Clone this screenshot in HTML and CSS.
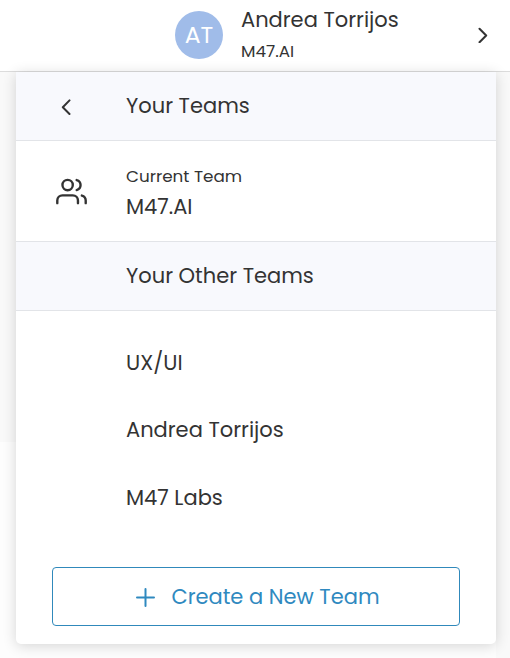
FILE: index.html
```html
<!DOCTYPE html>
<html lang="en">
<head>
    <meta charset="UTF-8">
    <meta name="viewport" content="width=device-width, initial-scale=1.0">
    <title>Your Teams</title>
    <link rel="stylesheet" href="styles.css">
</head>
<body>

<!-- User bar -->
<header class="user-bar">
    <div class="avatar">AT</div>
    <div class="user-info">
        <div class="user-name">Andrea Torrijos</div>
        <div class="user-team">M47.AI</div>
    </div>
    <svg class="chevron" viewBox="0 0 10 16"><path d="M1.5 1.7 8.2 8.5l-6.7 6.8"/></svg>
</header>

<main class="content">
    <div class="team-menu">
        <!-- Menu title -->
        <div class="menu-row menu-heading">
            <div class="row-icon back-icon">
                <svg class="chevron" viewBox="0 0 10 16"><path d="M8.5 1.4 1.8 8.2l6.7 6.8"/></svg>
            </div>
            <h1 class="teams-title">Your Teams</h1>
        </div>

        <!-- Current team -->
        <div class="menu-row current-team">
            <div class="row-icon">
                <svg class="users-icon" viewBox="0 0 24 24">
                    <path d="M17 21v-2a4 4 0 0 0-4-4H5a4 4 0 0 0-4 4v2"/>
                    <circle cx="9" cy="7" r="4"/>
                    <path d="M23 21v-2a4 4 0 0 0-3-3.87"/>
                    <path d="M16 3.13a4 4 0 0 1 0 7.75"/>
                </svg>
            </div>
            <div>
                <div class="current-label">Current Team</div>
                <div class="current-name">M47.AI</div>
            </div>
        </div>

        <!-- Other teams -->
        <div class="menu-row menu-heading other-heading">
            <h2 class="other-title">Your Other Teams</h2>
        </div>
        <ul class="team-list">
            <li class="team-ux">UX/UI</li>
            <li class="team-user">Andrea Torrijos</li>
            <li class="team-labs">M47 Labs</li>
        </ul>

        <button class="create-btn">
            <svg class="plus-icon" viewBox="0 0 20 20"><path d="M10.5 2v17M2 10.5h17"/></svg>
            <span>Create a New Team</span>
        </button>
    </div>
</main>

</body>
</html>
```

FILE: styles.css
```css
/* Reset styles */
* {
    margin: 0;
    padding: 0;
    box-sizing: border-box;
}

body {
    height: 658px;
    overflow: hidden;
    display: flex;
    flex-direction: column;
    background-color: #fff;
    color: #333;
    font-family: Poppins, Inter, sans-serif;
    font-size: 21px;
    line-height: 30px;
}

svg {
    display: block;
    fill: none;
    stroke: currentColor;
    stroke-linecap: round;
    stroke-linejoin: round;
}

/* User bar */
.user-bar {
    flex: none;
    display: flex;
    align-items: center;
    height: 72px;
    padding: 0 22px 1px 175px;
    border-bottom: 1px solid #dcdcdc;
}

.avatar {
    width: 48px;
    height: 48px;
    margin-right: 18px;
    border-radius: 50%;
    background-color: #a0bce9;
    color: #fff;
    font-size: 23.5px;
    font-weight: 400;
    line-height: 48px;
    text-align: center;
}

.user-info {
    flex: 1;
    white-space: nowrap;
}

.user-name {
    line-height: 33px;
}

.user-team {
    font-size: 16.8px;
    line-height: 31px;
}

.chevron {
    width: 10px;
    height: 16px;
    stroke-width: 2;
}

/* Page behind the menu */
.content {
    flex: 1;
    padding: 0 14px 14px 16px;
    background: linear-gradient(#fdfdfd, #fdfdfd) 0 370px / 496px 100% no-repeat #f9f9f9;
}

/* Team menu */
.team-menu {
    height: 572px;
    border-radius: 0 0 5px 5px;
    background-color: #fff;
    box-shadow: 0 2px 14px rgba(0, 0, 0, 0.16);
}

.menu-row {
    display: flex;
    align-items: center;
    border-bottom: 1px solid #e2e4e8;
}

.menu-heading {
    height: 69px;
    background-color: #f8f9fd;
}

.menu-heading h1,
.menu-heading h2 {
    font-size: 21px;
    font-weight: 400;
}

.row-icon {
    width: 110px;
    display: flex;
    justify-content: center;
}

.back-icon {
    padding: 2px 11px 0 0;
}

.current-team {
    height: 101px;
    padding-top: 1px;
}

.users-icon {
    width: 31px;
    height: 31px;
    stroke-width: 1.85;
}

.current-label {
    margin: -1px 0 1px;
    font-size: 16.8px;
}

.other-heading {
    padding-left: 110px;
}

.team-list {
    padding: 18px 0 0 110px;
    list-style: none;
}

.team-list li {
    height: 67px;
    line-height: 67px;
}

.team-list .team-labs {
    line-height: 69px;
}

/* Create button */
.create-btn {
    display: flex;
    align-items: center;
    justify-content: center;
    width: 408px;
    height: 59px;
    margin: 37px 0 0 36px;
    padding-left: 3px;
    gap: 16px;
    border: 1px solid #3089bb;
    border-radius: 4px;
    background-color: #fff;
    color: #2f89bf;
    font: inherit;
}

.plus-icon {
    width: 20px;
    height: 20px;
    stroke-width: 2;
}
```
